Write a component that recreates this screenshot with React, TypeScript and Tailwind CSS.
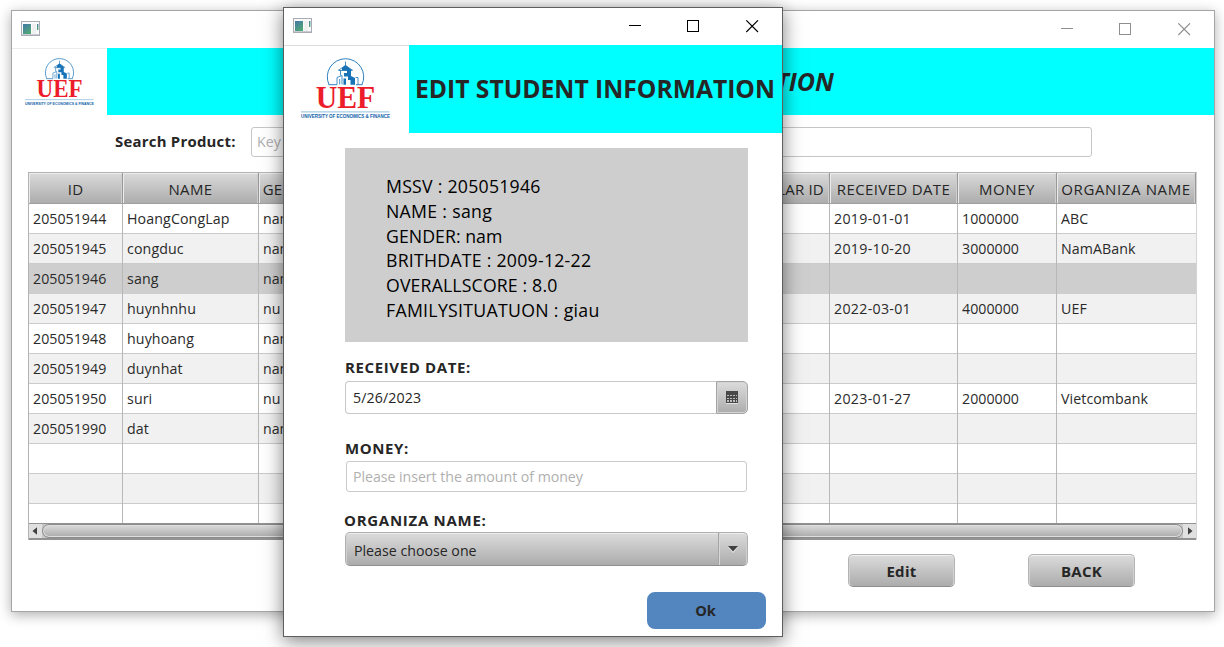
import React from "react";

const COLUMNS = [
  { title: "ID", cell: "w-[94px]", head: "tracking-[0.2px]" },
  { title: "NAME", cell: "w-[136px]", head: "tracking-[0.4px]" },
  { title: "GENDER", cell: "w-[68px]", head: "tracking-[0.1px]" },
  { title: "", cell: "w-[124px]", head: "" },
  { title: "", cell: "w-[140px]", head: "" },
  { title: "", cell: "w-[140px]", head: "" },
  { title: "SCHOLAR ID", cell: "w-[99px]", head: "tracking-[0.2px]" },
  { title: "RECEIVED DATE", cell: "w-[128px]", head: "tracking-[0.37px]" },
  { title: "MONEY", cell: "w-[99px]", head: "tracking-[0.55px]" },
  { title: "ORGANIZA NAME", cell: "w-[139px]", head: "tracking-[0.62px]" },
];

const BODY_TRACKING = [
  "tracking-[0.03px]",
  "tracking-[0.12px]",
  "",
  "",
  "",
  "",
  "",
  "tracking-[0.3px]",
  "tracking-[0.03px]",
  "tracking-[0.08px]",
];

const ROWS: string[][] = [
  ["205051944", "HoangCongLap", "nam", "", "", "", "", "2019-01-01", "1000000", "ABC"],
  ["205051945", "congduc", "nam", "", "", "", "", "2019-10-20", "3000000", "NamABank"],
  ["205051946", "sang", "nam", "", "", "", "", "", "", ""],
  ["205051947", "huynhnhu", "nu", "", "", "", "", "2022-03-01", "4000000", "UEF"],
  ["205051948", "huyhoang", "nam", "", "", "", "", "", "", ""],
  ["205051949", "duynhat", "nam", "", "", "", "", "", "", ""],
  ["205051950", "suri", "nu", "", "", "", "", "2023-01-27", "2000000", "Vietcombank"],
  ["205051990", "dat", "nam", "", "", "", "", "", "", ""],
  ["", "", "", "", "", "", "", "", "", ""],
  ["", "", "", "", "", "", "", "", "", ""],
  ["", "", "", "", "", "", "", "", "", ""],
];
const SELECTED = 2;

function AppIcon() {
  return (
    <svg width="19" height="15" viewBox="0 0 19 15" className="block">
      <defs>
        <linearGradient id="appicon" x1="0" y1="0" x2="0.6" y2="1">
          <stop offset="0" stopColor="#4576a8" />
          <stop offset="1" stopColor="#4fa778" />
        </linearGradient>
      </defs>
      <rect x="0.5" y="0.5" width="18" height="14" fill="#fafafa" stroke="#a9acb4" />
      <rect x="1" y="13" width="17" height="1" fill="#c9ccd2" />
      <rect x="2" y="3" width="8" height="10" fill="url(#appicon)" />
      <rect x="11" y="3" width="4" height="10" fill="#f0f0f0" />
      <rect x="16" y="3" width="1.4" height="6" fill="url(#appicon)" />
    </svg>
  );
}

function Logo({ className }: { className: string }) {
  return (
    <svg viewBox="0 0 91 62" className={className}>
      <g fill="none" stroke="#1673b8">
        <path d="M29 26.6A18.2 18.2 0 1 1 62 26.6" strokeWidth="0.9" />
        <path d="M28.5 26.7H37M56 26.7H62.5" strokeWidth="0.9" />
        <path d="M37 26.5V19.5L42 17.5V26.5M39.7 26.5V21M55.5 19.5H58V26.5M38 12.5L45.5 7.5L53 12.5M39 12.5H52M40.5 12.5V17.5M45.5 3.5V7.5" strokeWidth="0.8" />
      </g>
      <path d="M42 10L45.5 7L51 11.5V12.5H42ZM47 12.5H51V18L55 20V26.7H50.5V22H48V18.5H44V15H47ZM43.5 20.5H46V26.7H43.5Z" fill="#1673b8" />
      <text x="15.8" y="50.3" textLength="59.5" lengthAdjust="spacingAndGlyphs" fontSize="31.5" fontWeight="700" fill="#ec1c2b" className="font-['Liberation_Serif',serif]">UEF</text>
      <rect x="1" y="53.4" width="88.5" height="1" fill="#8fbfe0" />
      <text x="1" y="60.2" textLength="89" lengthAdjust="spacingAndGlyphs" fontSize="4.6" fontWeight="700" fill="#0e62a8" className="font-['Liberation_Sans',sans-serif]">UNIVERSITY OF ECONOMICS &amp; FINANCE</text>
    </svg>
  );
}

function WindowControls({ className }: { className: string }) {
  return (
    <svg width="130" height="13" viewBox="0 0 130 13" fill="none" stroke="currentColor" className={className}>
      <path d="M0 5.5H12" shapeRendering="crispEdges" />
      <rect x="58.5" y="0.5" width="11" height="11" shapeRendering="crispEdges" />
      <path d="M117.3 0.3L129 12M129 0.3L117.3 12" strokeWidth="1.1" />
    </svg>
  );
}

function Table() {
  return (
    <div className="flex h-[368px] w-[1169px] flex-col overflow-hidden border-l border-r border-t border-[#b3b3b3] border-r-[#d4d4d4]">
      <div className="flex h-[31px] shrink-0 border-b border-[#a0a0a0]">
        {COLUMNS.map((c, i) => (
          <div
            key={i}
            className={`flex shrink-0 items-center justify-center overflow-hidden whitespace-nowrap border-r border-[#979797] bg-gradient-to-b from-[#dadada] to-[#adadad] pt-[3px] text-[15px] text-[#262626] shadow-[inset_1px_1px_0_#ececec,inset_-1px_0_0_#cfcfcf] ${c.cell} ${c.head}`}
          >
            {c.title}
          </div>
        ))}
      </div>
      <div className="h-[319px] shrink-0 overflow-hidden">
        {ROWS.map((row, i) => (
          <div
            key={i}
            className={`flex h-[30px] border-b ${
              i === SELECTED ? "border-[#cecece] bg-[#cecece]" : i % 2 ? "border-[#cbcbcb] bg-[#f1f1f1]" : "border-[#cbcbcb] bg-white"
            }`}
          >
            {row.map((v, j) => (
              <div
                key={j}
                className={`h-[30px] shrink-0 overflow-hidden whitespace-nowrap border-r border-[#b8b8b8] pl-1 text-[14.2px] leading-[29px] text-[#2a2a2a] last:border-r-0 ${COLUMNS[j].cell} ${BODY_TRACKING[j]}`}
              >
                {v}
              </div>
            ))}
          </div>
        ))}
      </div>
      <div className="flex h-[17px] shrink-0 items-center border-y border-b-2 border-[#929292] bg-[#c6c6c6]">
        <svg width="13" height="14" viewBox="0 0 13 14" className="shrink-0 bg-[#e0e0e0]">
          <path d="M3.5 7L8 3.2V10.8Z" fill="#404040" />
        </svg>
        <div className="h-[14px] grow rounded-full border border-[#8c8c8c] bg-gradient-to-b from-[#dcdcdc] to-[#ababab] shadow-[inset_0_0_0_1px_#dedede]" />
        <svg width="13" height="14" viewBox="0 0 13 14" className="shrink-0 bg-[#e0e0e0]">
          <path d="M9.5 7L5 3.2V10.8Z" fill="#404040" />
        </svg>
      </div>
    </div>
  );
}

function GreyButton({ children }: { children: React.ReactNode }) {
  return (
    <button className="h-[33px] w-[107px] rounded-[5px] border border-[#b4b4b4] border-b-[#8e8e8e] bg-gradient-to-b from-[#dcdcdc] to-[#acacac] pt-[2px] text-[15px] font-bold tracking-[0.3px] text-[#262626] shadow-[inset_0_1px_0_#f0f0f0,inset_1px_0_0_#d2d2d2,inset_-1px_0_0_#d2d2d2]">
      {children}
    </button>
  );
}

function MainWindow() {
  return (
    <div className="ml-[11px] mt-[10px] flex h-[602px] w-[1204px] shrink-0 flex-col border border-[#a5a5a5] bg-white shadow-[0_3px_12px_rgba(0,0,0,0.32)]">
      <div className="flex h-[37px] shrink-0 items-start justify-between pl-[9px] pr-[23px]">
        <div className="pt-[10px]"><AppIcon /></div>
        <WindowControls className="mt-3 text-[#8f8f8f]" />
      </div>
      <div className="flex h-[67px] shrink-0">
        <div className="w-[95px] border-t border-[#ececec] pl-3 pt-[9px]">
          <Logo className="h-[48px] w-[71px] overflow-visible" />
        </div>
        <div className="flex grow items-center justify-end bg-[#00ffff] pr-[380px] text-[25px] font-bold italic text-[#262626]">
          INFORMATION
        </div>
      </div>
      <div className="flex h-[57px] shrink-0 items-start pl-[103px] pt-3">
        <div className="-mt-px w-[136px] whitespace-nowrap text-[14.9px] font-bold leading-[30px] tracking-[0.25px] text-[#262626]">Search Product:</div>
        <div className="h-[30px] w-[841px] rounded-[3px] border border-[#c6c6c6] pl-[5px] text-[14.2px] leading-[27px] text-[#b0b0b0]">Key</div>
      </div>
      <div className="pl-4"><Table /></div>
      <div className="mt-[14px] flex gap-[73px] pl-[836px]">
        <GreyButton>Edit</GreyButton>
        <GreyButton>BACK</GreyButton>
      </div>
    </div>
  );
}

const DETAILS = [
  { text: "MSSV : 205051946", tracking: "tracking-[0.25px]" },
  { text: "NAME : sang", tracking: "tracking-[0.3px]" },
  { text: "GENDER: nam", tracking: "tracking-[0.05px]" },
  { text: "BRITHDATE : 2009-12-22", tracking: "tracking-[0.25px]" },
  { text: "OVERALLSCORE : 8.0", tracking: "tracking-[0.15px]" },
  { text: "FAMILYSITUATUON : giau", tracking: "tracking-[0.3px]" },
];

function CalendarIcon() {
  return (
    <svg width="13" height="13" viewBox="0 0 13 13" shapeRendering="crispEdges">
      <rect width="12" height="12" fill="#484848" />
      <rect y="12" width="12" height="1" fill="#e2e2e2" />
      <path d="M1 4.5H11M1 7.5H11M1 10H11" stroke="#bdbdbd" strokeWidth="2" strokeDasharray="2 1" />
      <path d="M0 8.9H12M0 5.9H12" stroke="#484848" strokeWidth="1" />
    </svg>
  );
}

function EditDialog() {
  return (
    <div className="absolute left-[283px] top-[7px] flex h-[630px] w-[500px] flex-col border border-[#5e5e5e] bg-white shadow-[0_4px_18px_rgba(0,0,0,0.5)]">
      <div className="flex h-[37px] shrink-0 items-start justify-between pl-[9px] pr-[23px]">
        <div className="pt-[10px]"><AppIcon /></div>
        <WindowControls className="mt-3 text-black" />
      </div>
      <div className="flex h-[88px] shrink-0">
        <div className="w-[125px] border-t border-[#dcdcdc] pl-4 pt-3">
          <Logo className="h-[62px] w-[91px] overflow-visible" />
        </div>
        <div className="flex grow items-center whitespace-nowrap bg-[#00ffff] pl-[6px] pt-[1px] text-[24.65px] font-bold text-[#262626]">
          EDIT STUDENT INFORMATION
        </div>
      </div>
      <div className="flex flex-col items-start pl-[61px] pt-[15px]">
        <div className="h-[194px] w-[403px] bg-[#cecece] pl-[41px] pt-[26px] text-[17.7px] leading-[24.8px] text-black">
          {DETAILS.map((d) => (
            <div key={d.text} className={`whitespace-nowrap ${d.tracking}`}>{d.text}</div>
          ))}
        </div>

        <div className="mt-[15px] text-[15px] font-bold leading-5 tracking-[0.62px] text-[#262626]">RECEIVED DATE:</div>
        <div className="mt-1 flex h-[33px] w-[403px]">
          <div className="grow rounded-l-[4px] border border-r-0 border-[#c8c8c8] pl-[7px] text-[14.2px] leading-[31px] tracking-[0.1px] text-[#262626]">5/26/2023</div>
          <div className="flex w-[32px] items-center justify-center rounded-r-[5px] border border-[#a4a4a4] bg-gradient-to-b from-[#dcdcdc] to-[#acacac] shadow-[inset_0_0_0_1px_#d4d4d4]">
            <CalendarIcon />
          </div>
        </div>

        <div className="mt-6 text-[15px] font-bold leading-5 tracking-[0.6px] text-[#262626]">MONEY:</div>
        <div className="ml-px mt-[3px] h-[31px] w-[401px] rounded-[3px] border border-[#cacaca] pl-[6px] text-[14.2px] leading-[29px] tracking-[-0.05px] text-[#b0b0b0]">
          Please insert the amount of money
        </div>

        <div className="-ml-px mt-[18px] text-[15px] font-bold leading-5 tracking-[0.72px] text-[#262626]">ORGANIZA NAME:</div>
        <div className="mt-[2px] flex h-[34px] w-[403px] overflow-hidden rounded-[5px] border border-[#b0b0b0] border-b-[#8e8e8e] bg-gradient-to-b from-[#dcdcdc] to-[#acacac] shadow-[inset_0_1px_0_#ededed,inset_1px_0_0_#d0d0d0,inset_-1px_0_0_#d0d0d0]">
          <div className="grow pl-2 text-[14.2px] leading-[36px] text-[#262626]">Please choose one</div>
          <div className="flex w-[29px] items-center justify-center border-l border-[#a4a4a4] shadow-[inset_1px_0_0_#d8d8d8]">
            <svg width="10" height="7" viewBox="0 0 10 7">
              <path d="M0 1H10L5 7Z" fill="#e6e6e6" />
              <path d="M0 0H10L5 5.5Z" fill="#404040" />
            </svg>
          </div>
        </div>

        <button className="ml-[302px] mt-[26px] h-[37px] w-[119px] rounded-[8px] bg-[#5385be] pr-[2px] text-[14.6px] font-bold text-[#262626]">Ok</button>
      </div>
    </div>
  );
}

export default function App() {
  return (
    <div className="relative flex h-[647px] w-[1224px] items-start overflow-hidden bg-white font-['Open_Sans','Noto_Sans',sans-serif]">
      <MainWindow />
      <EditDialog />
    </div>
  );
}
